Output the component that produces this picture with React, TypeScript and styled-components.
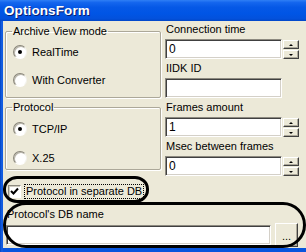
import styled, { createGlobalStyle } from 'styled-components';

const GlobalStyle = createGlobalStyle`
  html, body {
    margin: 0;
    padding: 0;
    background: #ece9d8;
  }
  body {
    font-family: "Liberation Sans", Arial, sans-serif;
    font-size: 11px;
    color: #000;
  }
`;

const Window = styled.div`
  position: relative;
  width: 306px;
  height: 252px;
  overflow: hidden;
  display: flex;
  flex-direction: column;
  background: #0a4fd6;
`;

const TitleBar = styled.div`
  height: 21px;
  flex: none;
  display: flex;
  align-items: center;
  padding-left: 4px;
  background: linear-gradient(
    to bottom,
    #2f7ff5 0%,
    #1466ee 12%,
    #0558e6 35%,
    #0055e5 65%,
    #0351dc 88%,
    #0147c9 100%
  );
  color: #fff;
  font-weight: bold;
  font-size: 13.5px;
  letter-spacing: 0.1px;
  text-shadow: 1px 1px 0 #0a1e6e;
`;

const Frame = styled.div`
  flex: 1;
  display: flex;
  padding: 0 0 4px 3px;
  background: linear-gradient(to right, #0044c4 0, #1a63e6 2px, #0855dd 3px);
`;

const Body = styled.div`
  flex: 1;
  display: flex;
  flex-direction: column;
  background: #ece9d8;
  padding-top: 1px;
`;

const TopRow = styled.div`
  display: flex;
  gap: 4px;
  padding-left: 2px;
`;

const LeftCol = styled.div`
  width: 156px;
  display: flex;
  flex-direction: column;
  gap: 2px;
  margin-top: 2px;
`;

const Group = styled.fieldset<{ $height: number }>`
  margin: 0;
  padding: 0 0 0 7px;
  min-inline-size: 0;
  height: ${({ $height }) => $height}px;
  box-sizing: border-box;
  border: 1px solid #aca899;
  border-radius: 2px;
  box-shadow: inset 1px 1px 0 #fff, 1px 1px 0 #fff;
`;

const Legend = styled.legend`
  padding: 0 1px;
  margin-left: -1px;
  line-height: 14px;
  font-size: 11px;
`;

const RadioRow = styled.div<{ $h: number }>`
  height: ${({ $h }) => $h}px;
  display: flex;
  align-items: center;
  gap: 5px;
`;

const RadioCircle = styled.span<{ $checked?: boolean }>`
  position: relative;
  width: 12px;
  height: 12px;
  border-radius: 50%;
  background: radial-gradient(circle at 60% 60%, #fff 55%, #e6e3da 100%);
  border: 1px solid;
  border-color: #8a877b #f4f3ee #ffffff #8a877b;
  box-shadow: inset 1px 1px 0 #b9b6aa;
  &::after {
    content: '';
    display: ${({ $checked }) => ($checked ? 'block' : 'none')};
    position: absolute;
    left: 4px;
    top: 4px;
    width: 4px;
    height: 4px;
    border-radius: 50%;
    background: #000;
  }
`;

const RadioText = styled.span`
  line-height: 14px;
`;

const RightCol = styled.div`
  flex: 1;
  display: flex;
  flex-direction: column;
`;

const FieldBlock = styled.div`
  display: flex;
  flex-direction: column;
  height: 39px;
`;

const FieldLabel = styled.div`
  line-height: 14px;
  height: 14px;
  margin-bottom: 3px;
  padding-left: 1px;
`;

const FieldLine = styled.div`
  display: flex;
  gap: 1px;
  align-items: flex-start;
`;

const Edit = styled.div<{ $width: number }>`
  width: ${({ $width }) => $width}px;
  height: 20px;
  box-sizing: border-box;
  background: #fff;
  border: 1px solid;
  border-color: #8d8a80 #fff #fff #8d8a80;
  box-shadow: inset 1px 1px 0 #404040, inset -1px -1px 0 #d4d0c8;
  padding: 0 3px;
  display: flex;
  align-items: center;
  font-size: 12px;
`;

const Spinner = styled.div`
  display: flex;
  flex-direction: column;
  gap: 1px;
  margin-top: 1px;
`;

const SpinButton = styled.div<{ $down?: boolean }>`
  width: 16px;
  height: 9px;
  box-sizing: border-box;
  background: #ece9d8;
  border: 1px solid;
  border-color: #fff #404040 #404040 #fff;
  box-shadow: inset -1px -1px 0 #aca899;
  display: flex;
  align-items: center;
  justify-content: center;
  &::after {
    content: '';
    width: 0;
    height: 0;
    border-left: 2px solid transparent;
    border-right: 2px solid transparent;
    ${({ $down }) =>
      $down ? 'border-top: 2px solid #000;' : 'border-bottom: 2px solid #000;'}
  }
`;

const CheckRow = styled.div`
  display: flex;
  align-items: center;
  gap: 4px;
  height: 16px;
  margin-top: 5px;
  padding-left: 5px;
`;

const CheckBox = styled.span`
  width: 13px;
  height: 13px;
  box-sizing: border-box;
  background: #fff;
  border: 1px solid;
  border-color: #8d8a80 #fff #fff #8d8a80;
  box-shadow: inset 1px 1px 0 #cfccc0;
  display: flex;
  align-items: center;
  justify-content: center;
`;

const FocusText = styled.span`
  outline: 1px dotted #000;
  outline-offset: 0;
  padding: 0 1px;
  line-height: 13px;
`;

const DbLabel = styled.div`
  line-height: 14px;
  margin-top: 8px;
  padding-left: 4px;
`;

const DbLine = styled.div`
  display: flex;
  align-items: center;
  gap: 4px;
  padding-left: 3px;
  margin-top: 2px;
`;

const BrowseButton = styled.div`
  width: 23px;
  height: 24px;
  box-sizing: border-box;
  background: #ece9d8;
  border: 1px solid;
  border-color: #fff #404040 #404040 #fff;
  box-shadow: inset -1px -1px 0 #aca899;
  display: flex;
  align-items: flex-end;
  justify-content: center;
  padding-bottom: 4px;
  font-size: 11px;
  line-height: 11px;
`;

const Mark = styled.div<{ $l: number; $t: number; $w: number; $h: number; $r: string }>`
  position: absolute;
  left: ${({ $l }) => $l}px;
  top: ${({ $t }) => $t}px;
  width: ${({ $w }) => $w}px;
  height: ${({ $h }) => $h}px;
  box-sizing: border-box;
  border: 3px solid #000;
  border-radius: ${({ $r }) => $r};
  pointer-events: none;
`;

const fields = [
  { label: 'Connection time', value: '0', spin: true },
  { label: 'IIDK ID', value: '', spin: false },
  { label: 'Frames amount', value: '1', spin: true },
  { label: 'Msec between frames', value: '0', spin: true },
];

const App = () => {
  return (
    <>
      <GlobalStyle />
      <Window>
        <TitleBar>OptionsForm</TitleBar>
        <Frame>
          <Body>
            <TopRow>
              <LeftCol>
                <Group $height={74}>
                  <Legend>Archive View mode</Legend>
                  <RadioRow $h={28}>
                    <RadioCircle $checked />
                    <RadioText>RealTime</RadioText>
                  </RadioRow>
                  <RadioRow $h={28}>
                    <RadioCircle />
                    <RadioText>With Converter</RadioText>
                  </RadioRow>
                </Group>
                <Group $height={70}>
                  <Legend>Protocol</Legend>
                  <RadioRow $h={30}>
                    <RadioCircle $checked />
                    <RadioText>TCP/IP</RadioText>
                  </RadioRow>
                  <RadioRow $h={28}>
                    <RadioCircle />
                    <RadioText>X.25</RadioText>
                  </RadioRow>
                </Group>
              </LeftCol>
              <RightCol>
                {fields.map((f) => (
                  <FieldBlock key={f.label}>
                    <FieldLabel>{f.label}</FieldLabel>
                    <FieldLine>
                      <Edit $width={117}>{f.value}</Edit>
                      {f.spin && (
                        <Spinner>
                          <SpinButton />
                          <SpinButton $down />
                        </Spinner>
                      )}
                    </FieldLine>
                  </FieldBlock>
                ))}
              </RightCol>
            </TopRow>
            <CheckRow>
              <CheckBox>
                <svg width="9" height="9" viewBox="0 0 9 9">
                  <path d="M1 4 L3.5 6.5 L8 1.5" stroke="#000" strokeWidth="2" fill="none" />
                </svg>
              </CheckBox>
              <FocusText>Protocol in separate DB</FocusText>
            </CheckRow>
            <DbLabel>Protocol's DB name</DbLabel>
            <DbLine>
              <Edit $width={265} />
              <BrowseButton>...</BrowseButton>
            </DbLine>
          </Body>
        </Frame>
        <Mark $l={3} $t={176} $w={146} $h={27} $r="14px / 13px" />
        <Mark $l={3} $t={202} $w={303} $h={46} $r="23px" />
      </Window>
    </>
  );
};

export default App;
